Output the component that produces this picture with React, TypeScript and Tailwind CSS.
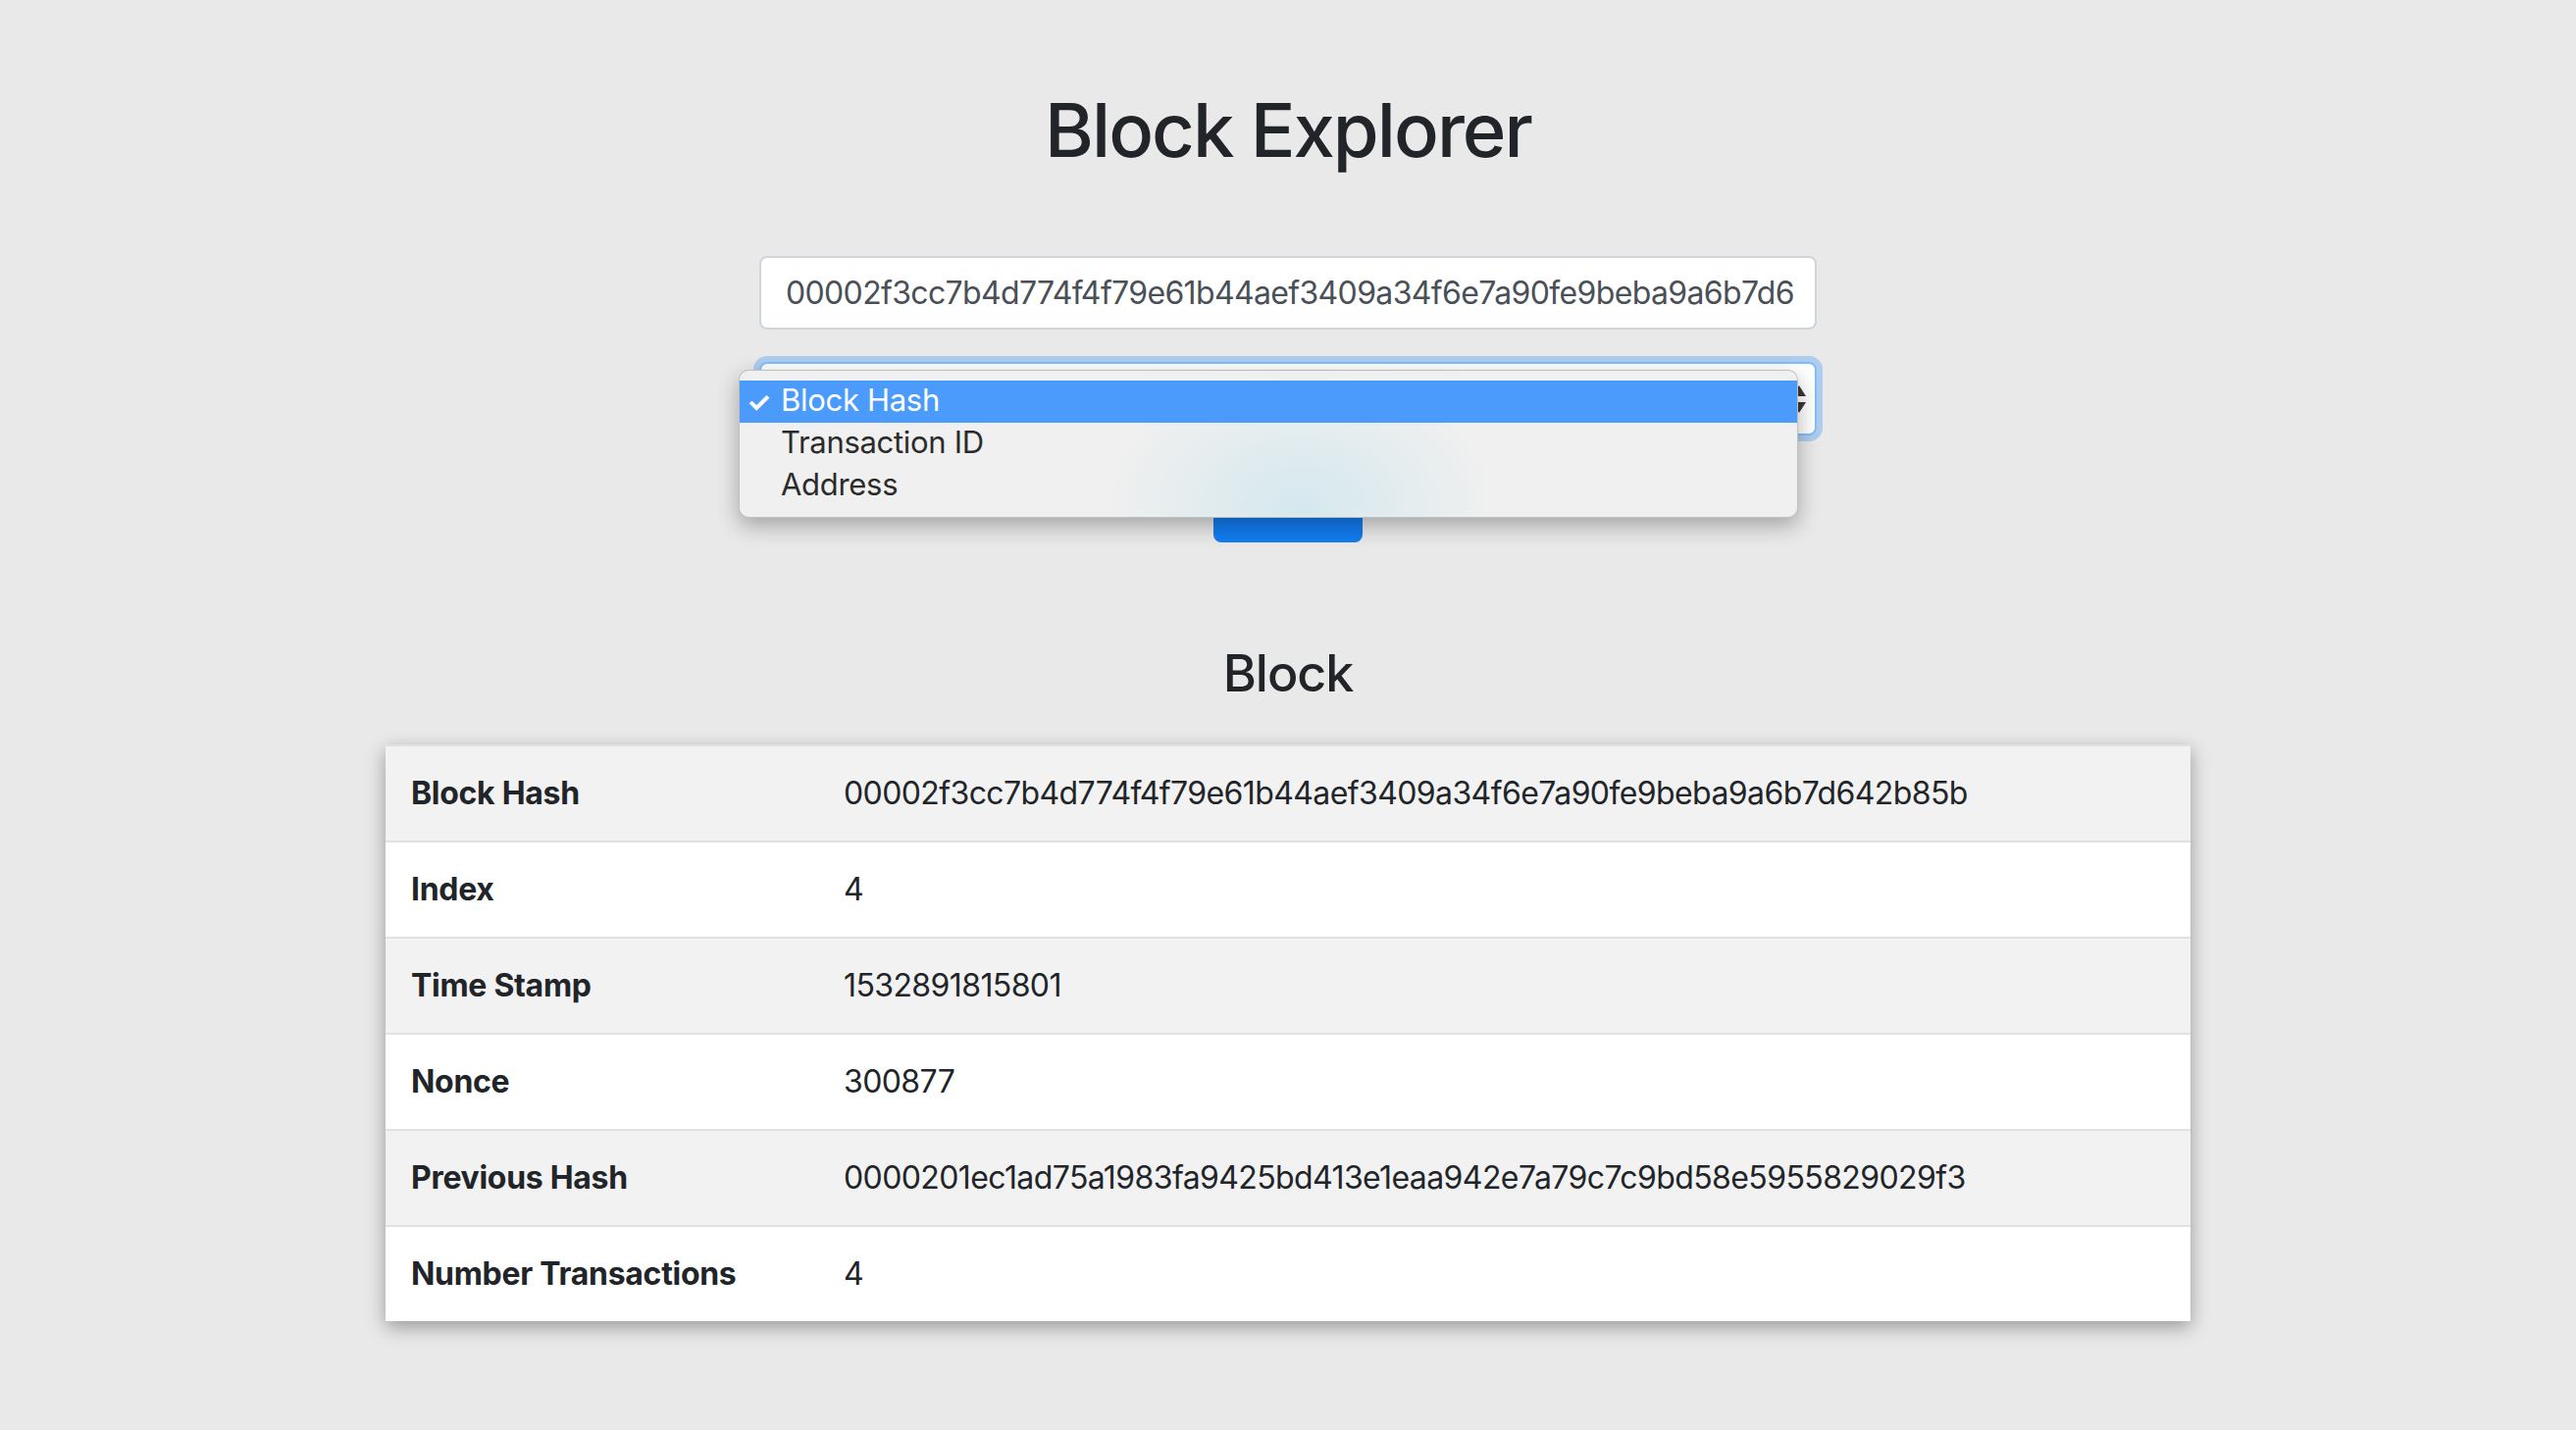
import React from 'react';

const HASH = '00002f3cc7b4d774f4f79e61b44aef3409a34f6e7a90fe9beba9a6b7d642b85b';

const rows: { label: string; value: string }[] = [
	{ label: 'Block Hash', value: HASH },
	{ label: 'Index', value: '4' },
	{ label: 'Time Stamp', value: '1532891815801' },
	{ label: 'Nonce', value: '300877' },
	{ label: 'Previous Hash', value: '0000201ec1ad75a1983fa9425bd413e1eaa942e7a79c7c9bd58e5955829029f3' },
	{ label: 'Number Transactions', value: '4' },
];

const options = ['Block Hash', 'Transaction ID', 'Address'];

const App: React.FC = () => {
	return (
		<div className="min-h-screen w-full bg-[#e9e9e9] font-['Inter',sans-serif] text-[#212529] flex flex-col items-center">
			{/* Title */}
			<h1 className="mt-[86px] text-[76px] leading-[92px] font-medium tracking-[-2px]">Block Explorer</h1>

			{/* Search form */}
			<div className="mt-[83px] w-[1078px] flex flex-col items-center">
				<input
					readOnly
					defaultValue={HASH.slice(0, 58)}
					className="w-full h-[75px] bg-white border-2 border-[#ced4da] rounded-[8px] pl-[25px] pr-[8px] text-[32px] tracking-[-0.65px] text-[#495057] outline-none"
				/>

				{/* Select with native popup open */}
				<div className="relative w-full mt-[33px]">
					<div className="w-full h-[75px] bg-white border-2 border-[#80bdff] rounded-[8px] shadow-[0_0_0_6px_rgba(0,123,255,0.25)] flex items-center justify-end pr-[8px]">
						<svg width="16" height="30" viewBox="0 0 16 30" className="text-[#3a3a3a]">
							<path d="M8 1 L15 12 L1 12 Z" fill="currentColor" />
							<path d="M8 29 L15 18 L1 18 Z" fill="currentColor" />
						</svg>
					</div>

					<div className="absolute left-[-21px] top-[8px] w-[1080px] py-[10px] rounded-[10px] border border-black/20 bg-[#f0f0f0] bg-[radial-gradient(ellipse_200px_140px_at_53%_92%,#d5e8ee,#f0f0f0)] shadow-[0_8px_22px_rgba(0,0,0,0.3)] z-10">
						{options.map((opt, i) => (
							<div
								key={opt}
								className={`h-[43px] flex items-center text-[31px] tracking-[-0.3px] ${
									i === 0 ? 'bg-[#4a9bfc] text-white' : 'text-[#2b2b2b]'
								}`}
							>
								<span className="w-[42px] pl-[7px] text-[28px] font-bold leading-none">{i === 0 ? '✓' : ''}</span>
								<span className="-mt-[3px]">{opt}</span>
							</div>
						))}
					</div>
				</div>

				<button
					type="button"
					className="mt-[33px] w-[152px] h-[76px] rounded-[8px] bg-[#127cf0] text-white text-[32px]"
				>
					Submit
				</button>
			</div>

			{/* Block details */}
			<h3 className="mt-[102px] text-[52px] leading-[64px] font-medium tracking-[-1px]">Block</h3>

			<div className="mt-[40px] mb-[110px] w-[1840px] bg-white shadow-[0_6px_18px_rgba(0,0,0,0.35)]">
				{rows.map((row, i) => (
					<div
						key={row.label}
						className={`h-[98px] flex items-center border-t-2 border-[#dee2e6] text-[32px] ${
							i % 2 === 0 ? 'bg-[#f2f2f2]' : 'bg-white'
						}`}
					>
						<div className="w-[441px] pl-[26px] font-bold tracking-[-0.3px]">{row.label}</div>
						<div className="pl-[26px] tracking-[-0.6px]">{row.value}</div>
					</div>
				))}
			</div>
		</div>
	);
};

export default App;
